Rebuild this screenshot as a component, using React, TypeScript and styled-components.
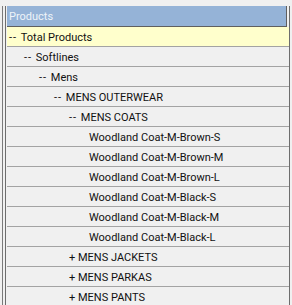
import React from "react";
import styled, { createGlobalStyle } from "styled-components";

const Global = createGlobalStyle`
  html, body { margin: 0; padding: 0; background: #f0f0f0; }
  body { font-family: Roboto, "Liberation Sans", Arial, sans-serif; }
`;

const Page = styled.div`
  width: 292px;
  height: 305px;
  overflow: hidden;
  padding: 6px 2px 0 2px;
  box-sizing: border-box;
  background: #f0f0f0;
`;

const Frame = styled.div`
  height: 100%;
  border-left: 1px solid #7a7a7a;
  padding-left: 2px;
`;

const Panel = styled.div`
  border-left: 1px solid #6d6d6d;
  border-right: 1px solid #6d6d6d;
  height: 100%;
  display: flex;
  flex-direction: column;
  padding-left: 1px;
  background: #f0f0f0;
`;

const Header = styled.div`
  height: 20px;
  background: #95b3d7;
  border-bottom: 1px solid #5f5f5f;
  border-right: 1px solid #5f5f5f;
  margin-right: 2px;
  color: #eef3f9;
  font-size: 11px;
  line-height: 21px;
  padding-left: 2px;
`;

const Row = styled.div<{ $level: number; $selected?: boolean; $leaf?: boolean }>`
  height: 17px;
  padding-top: 2px;
  line-height: 18px;
  border-bottom: 1px solid #a3a3a3;
  background: ${(p) => (p.$selected ? "#ffffcc" : "#f0f0f0")};
  padding-left: ${(p) => 2 + p.$level * 15 + (p.$leaf ? 5 : 0)}px;
  color: #111;
  font-size: 11px;
  white-space: nowrap;
`;

const Marker = styled.span<{ $dash?: boolean }>`
  letter-spacing: ${(p) => (p.$dash ? "1px" : "0")};
`;

type Item = { label: string; level: number; prefix: string; selected?: boolean };

const items: Item[] = [
  { label: "Total Products", level: 0, prefix: "--", selected: true },
  { label: "Softlines", level: 1, prefix: "--" },
  { label: "Mens", level: 2, prefix: "--" },
  { label: "MENS OUTERWEAR", level: 3, prefix: "--" },
  { label: "MENS COATS", level: 4, prefix: "--" },
  { label: "Woodland Coat-M-Brown-S", level: 5, prefix: "" },
  { label: "Woodland Coat-M-Brown-M", level: 5, prefix: "" },
  { label: "Woodland Coat-M-Brown-L", level: 5, prefix: "" },
  { label: "Woodland Coat-M-Black-S", level: 5, prefix: "" },
  { label: "Woodland Coat-M-Black-M", level: 5, prefix: "" },
  { label: "Woodland Coat-M-Black-L", level: 5, prefix: "" },
  { label: "MENS JACKETS", level: 4, prefix: "+" },
  { label: "MENS PARKAS", level: 4, prefix: "+" },
  { label: "MENS PANTS", level: 4, prefix: "+" },
];

export default function App() {
  return (
    <>
      <Global />
      <Page>
        <Frame>
          <Panel>
            <Header>Products</Header>
            {items.map((it, i) => (
              <Row key={i} $level={it.level} $selected={it.selected} $leaf={it.prefix === ""}>
                {it.prefix && <Marker $dash={it.prefix === "--"}>{it.prefix + " "}</Marker>}
                {it.label}
              </Row>
            ))}
          </Panel>
        </Frame>
      </Page>
    </>
  );
}
